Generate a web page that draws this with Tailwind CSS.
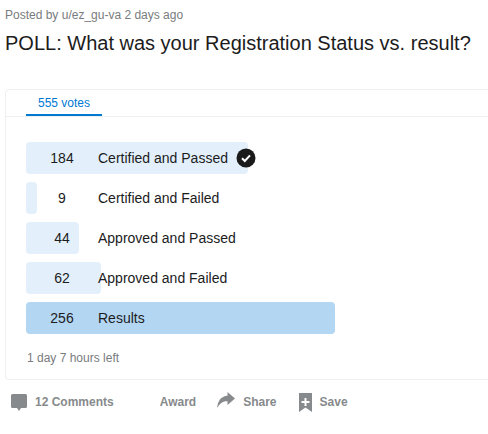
<!DOCTYPE html>
<html lang="en">
<head>
    <meta charset="UTF-8">
    <title>Poll</title>
    <script src="https://cdn.jsdelivr.net/npm/@tailwindcss/browser@4"></script>
</head>
<body class="bg-white font-['Liberation_Sans',Arial,sans-serif] w-[488px] h-[434px] overflow-hidden">

    <!-- Post header -->
    <div class="pl-[5px] pt-[7px]">
        <p class="text-[12px] leading-[16px] text-[#787c7e]">Posted by u/ez_gu-va 2 days ago</p>
        <h1 class="mt-[7px] text-[20px] leading-[26px] text-[#1c1c1c]">POLL: What was your Registration Status vs. result?</h1>
    </div>

    <!-- Poll card -->
    <div class="ml-[5px] mt-[33px] w-[500px] h-[291px] border border-[#edeff1] rounded-[4px]">
        <div class="h-[27px] border-b border-[#edeff1] pl-[20px]">
            <div class="w-[76px] h-[26px] border-b-2 border-[#0079d3] text-center text-[12px] leading-[18px] pt-[4px] text-[#0079d3]">555 votes</div>
        </div>

        <div class="pl-[20px] pt-[25px] flex flex-col gap-[8px] text-[14px] text-[#1c1c1c]">
            <div class="relative h-[32px] flex items-center">
                <div class="absolute left-0 top-0 h-full w-[222px] rounded-[4px] bg-[#e3f0fb]"></div>
                <span class="relative w-[72px] text-center">184</span>
                <span class="relative">Certified and Passed</span>
                <svg class="relative ml-[8px]" width="20" height="20" viewBox="0 0 20 20">
                    <circle cx="10" cy="10" r="9.5" fill="#1a1a1b"/>
                    <path d="M6 10.3 L8.8 13 L14 7.4" fill="none" stroke="#fff" stroke-width="2"/>
                </svg>
            </div>
            <div class="relative h-[32px] flex items-center">
                <div class="absolute left-0 top-0 h-full w-[11px] rounded-[4px] bg-[#e3f0fb]"></div>
                <span class="relative w-[72px] text-center">9</span>
                <span class="relative">Certified and Failed</span>
            </div>
            <div class="relative h-[32px] flex items-center">
                <div class="absolute left-0 top-0 h-full w-[53px] rounded-[4px] bg-[#e3f0fb]"></div>
                <span class="relative w-[72px] text-center">44</span>
                <span class="relative">Approved and Passed</span>
            </div>
            <div class="relative h-[32px] flex items-center">
                <div class="absolute left-0 top-0 h-full w-[75px] rounded-[4px] bg-[#e3f0fb]"></div>
                <span class="relative w-[72px] text-center">62</span>
                <span class="relative">Approved and Failed</span>
            </div>
            <div class="relative h-[32px] flex items-center">
                <div class="absolute left-0 top-0 h-full w-[309px] rounded-[4px] bg-[#b3d6f3]"></div>
                <span class="relative w-[72px] text-center">256</span>
                <span class="relative">Results</span>
            </div>
        </div>

        <p class="pl-[21px] mt-[16px] text-[12px] leading-[16px] text-[#787c7e]">1 day 7 hours left</p>
    </div>

    <!-- Action bar -->
    <div class="flex items-center h-[20px] mt-[12px] pl-[11px] text-[12px] font-bold text-[#878a8c]">
        <svg class="mt-[1px]" width="16" height="17" viewBox="0 0 16 17" fill="#878a8c"><path d="M1.5 0 H14.5 A1.5 1.5 0 0 1 16 1.5 V12.5 A1.5 1.5 0 0 1 14.5 14 H10 L8 17 L6 14 H1.5 A1.5 1.5 0 0 1 0 12.5 V1.5 A1.5 1.5 0 0 1 1.5 0 Z"/></svg>
        <span class="ml-[8px]">12 Comments</span>
        <span class="ml-[46px]">Award</span>
        <svg class="ml-[21px] mb-[4px]" width="18" height="16" viewBox="0 0 18 16" fill="#878a8c"><path d="M10.5 0 L18 6.5 L10.5 13 V9.3 C6 9.3 3 11 0.3 16 C0.3 9.5 4 4 10.5 3.7 Z"/></svg>
        <span class="ml-[8px]">Share</span>
        <svg class="ml-[22px]" width="13" height="19" viewBox="0 0 13 19" fill="#878a8c"><path fill-rule="evenodd" d="M0 0 H13 V19 L6.5 14.5 L0 19 Z M5.5 5 V8 H2.5 V10 H5.5 V13 H7.5 V10 H10.5 V8 H7.5 V5 Z"/></svg>
        <span class="ml-[8px]">Save</span>
    </div>

</body>
</html>
